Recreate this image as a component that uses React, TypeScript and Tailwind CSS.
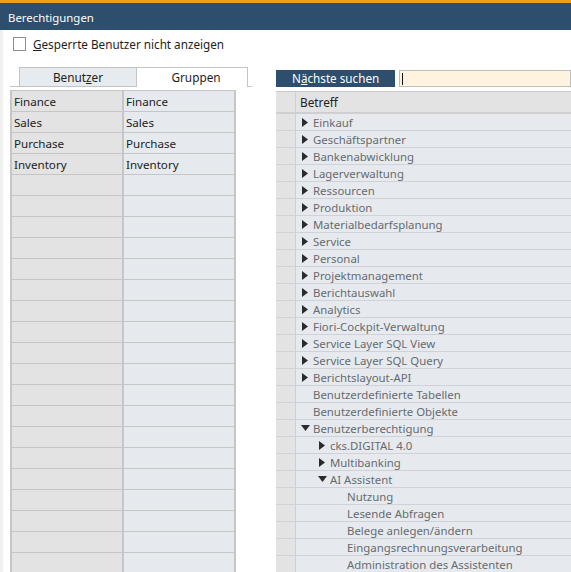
import React from "react";

type Node = { label: string; level: number; kind: "closed" | "open" | "leaf" };

const tree: Node[] = [
  { label: "Einkauf", level: 0, kind: "closed" },
  { label: "Geschäftspartner", level: 0, kind: "closed" },
  { label: "Bankenabwicklung", level: 0, kind: "closed" },
  { label: "Lagerverwaltung", level: 0, kind: "closed" },
  { label: "Ressourcen", level: 0, kind: "closed" },
  { label: "Produktion", level: 0, kind: "closed" },
  { label: "Materialbedarfsplanung", level: 0, kind: "closed" },
  { label: "Service", level: 0, kind: "closed" },
  { label: "Personal", level: 0, kind: "closed" },
  { label: "Projektmanagement", level: 0, kind: "closed" },
  { label: "Berichtauswahl", level: 0, kind: "closed" },
  { label: "Analytics", level: 0, kind: "closed" },
  { label: "Fiori-Cockpit-Verwaltung", level: 0, kind: "closed" },
  { label: "Service Layer SQL View", level: 0, kind: "closed" },
  { label: "Service Layer SQL Query", level: 0, kind: "closed" },
  { label: "Berichtslayout-API", level: 0, kind: "closed" },
  { label: "Benutzerdefinierte Tabellen", level: 0, kind: "leaf" },
  { label: "Benutzerdefinierte Objekte", level: 0, kind: "leaf" },
  { label: "Benutzerberechtigung", level: 0, kind: "open" },
  { label: "cks.DIGITAL 4.0", level: 1, kind: "closed" },
  { label: "Multibanking", level: 1, kind: "closed" },
  { label: "AI Assistent", level: 1, kind: "open" },
  { label: "Nutzung", level: 2, kind: "leaf" },
  { label: "Lesende Abfragen", level: 2, kind: "leaf" },
  { label: "Belege anlegen/ändern", level: 2, kind: "leaf" },
  { label: "Eingangsrechnungsverarbeitung", level: 2, kind: "leaf" },
  { label: "Administration des Assistenten", level: 2, kind: "leaf" },
];

const groups = ["Finance", "Sales", "Purchase", "Inventory"];

function Arrow({ open }: { open: boolean }) {
  return open ? (
    <svg width="9" height="6" viewBox="0 0 9 6" className="shrink-0">
      <path d="M0 0 H9 L4.5 6 Z" fill="#2b2b2b" />
    </svg>
  ) : (
    <svg width="6" height="9" viewBox="0 0 6 9" className="shrink-0">
      <path d="M0 0 L6 4.5 L0 9 Z" fill="#2b2b2b" />
    </svg>
  );
}

function TreeRow({ node }: { node: Node }) {
  const indent = [1, 18, 35][node.level];
  return (
    <div className="flex h-[17px] border-b border-[#cfd3d7]">
      <div className="w-[20px] shrink-0 bg-[#e3e3e3] border-r border-[#cfcfcf]" />
      <div className="flex-1 flex items-center bg-[#e6eaee]">
        <div style={{ width: indent }} className="shrink-0" />
        <div className="w-[16px] shrink-0 flex items-center justify-center">
          {node.kind !== "leaf" && <Arrow open={node.kind === "open"} />}
        </div>
        <span className="pt-[2px] text-[11.4px] leading-none text-[#666a6e] whitespace-nowrap">
          {node.label}
        </span>
      </div>
    </div>
  );
}

export default function App() {
  const leftRows = Array.from({ length: 23 }, (_, i) => groups[i] ?? "");
  return (
    <div
      className="w-[571px] h-[572px] overflow-hidden bg-white flex flex-col"
      style={{ fontFamily: '"Noto Sans", "Open Sans", sans-serif' }}
    >
      <div className="h-[3px] bg-[#e8a314] shrink-0" />
      <div className="h-[27px] shrink-0 bg-[#2d4e6d] flex items-center px-[8px] pt-[2px] text-white text-[11.4px]">
        Berechtigungen
      </div>
      <div className="flex flex-1 min-h-0">
        <div className="w-[3px] bg-[#f0f0f0] shrink-0" />
        <div className="flex-1 flex flex-col min-w-0">
          {/* option checkbox */}
          <div className="flex items-center h-[14px] mt-[7px] ml-[10px]">
            <div className="w-[13px] h-[14px] border border-[#8e8e8e] bg-white shrink-0" />
            <span className="ml-[7px] pt-[2px] text-[11.7px] text-[#1e1e1e] whitespace-nowrap">
              <span className="underline">G</span>esperrte Benutzer nicht anzeigen
            </span>
          </div>

          <div className="flex mt-[16px] min-h-0 flex-1">
            {/* left: users / groups */}
            <div className="ml-[7px] w-[242px] flex flex-col shrink-0">
              <div className="flex h-[20px] border-b border-[#c4c4c4] pl-[9px]">
                <div className="w-[118px] border border-b-0 border-[#c4c4c4] bg-[#e6ebf0] flex items-center justify-center pt-[1px] text-[11.8px] text-[#1e1e1e]">
                  <span>
                    Benut<span className="underline">z</span>er
                  </span>
                </div>
                <div className="w-[111px] border border-l-0 border-b-0 border-[#c4c4c4] bg-white -mb-px flex items-center justify-center pl-[8px] pt-[1px] text-[11.8px] text-[#1e1e1e]">
                  Gruppen
                </div>
              </div>
              <div className="mt-[3px] w-[226px] border-t border-l-2 border-r-2 border-[#c6c6c6]">
                {leftRows.map((g, i) => (
                  <div key={i} className="flex h-[21px] border-b border-[#c6c6c6]">
                    <div className="w-[112px] bg-[#e3e3e3] border-r-2 border-[#c6c6c6] flex items-center pl-[2px] pt-[2px] text-[11.6px] text-[#222]">
                      {g}
                    </div>
                    <div className="flex-1 bg-[#e6eaee] flex items-center pl-[2px] pt-[2px] text-[11.6px] text-[#222]">
                      {g}
                    </div>
                  </div>
                ))}
              </div>
            </div>

            {/* right: permission tree */}
            <div className="ml-[24px] flex-1 min-w-0 flex flex-col mt-[3px]">
              <div className="flex h-[17px] items-stretch">
                <div className="w-[119px] shrink-0 bg-[#2d4e6d] text-white text-[11.7px] flex items-center pl-[16px] pt-[1px]">
                  <span>
                    N<span className="underline">ä</span>chste suchen
                  </span>
                </div>
                <div className="ml-[4px] flex-1 border border-[#bdbdbd] bg-[#fdf3df] flex items-center pl-[2px]">
                  <div className="w-px h-[12px] bg-[#111]" />
                </div>
              </div>
              <div className="mt-[4px] border-t border-[#c8c8c8]">
                <div className="flex h-[22px] border-b-2 border-[#cfcfcf] bg-[#e3e3e3]">
                  <div className="w-[20px] shrink-0 border-r border-[#cfcfcf]" />
                  <div className="flex items-center pl-[4px] pt-[1px] text-[11.8px] text-[#222]">Betreff</div>
                </div>
                {tree.map((n, i) => (
                  <TreeRow key={i} node={n} />
                ))}
              </div>
            </div>
          </div>
        </div>
      </div>
    </div>
  );
}
